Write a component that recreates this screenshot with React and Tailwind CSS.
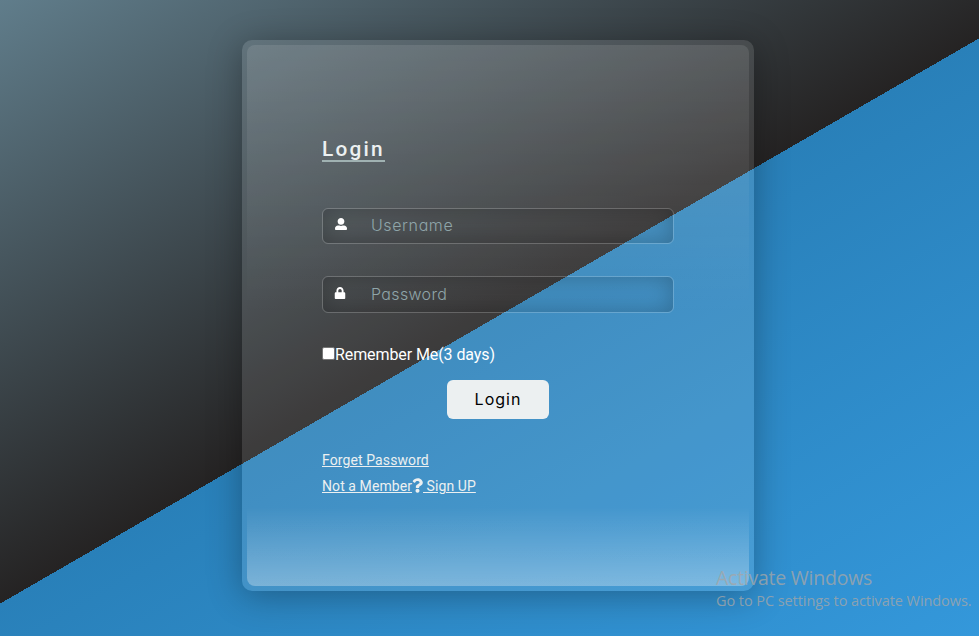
import { FaUserAlt, FaLock, FaQuestion } from "react-icons/fa";

function Field({ icon, label, type, className, iconClass, inputClass }) {
  return (
    <div
      className={`flex items-start rounded-md border border-white/20 shadow-[inset_0_0_25px_rgba(0,0,0,0.25)] ${className}`}
    >
      <span className={`flex shrink-0 text-white ${iconClass}`}>{icon}</span>
      <input
        type={type}
        placeholder={label}
        className={`min-w-0 flex-1 bg-transparent font-['Inter',sans-serif] text-[16px] font-light text-white outline-none [font-feature-settings:'cv11'] placeholder:text-[#8fa5a9] ${inputClass}`}
      />
    </div>
  );
}

export default function App() {
  return (
    <main className="relative flex h-[636px] w-[979px] items-start overflow-hidden bg-[linear-gradient(150deg,#607d8b_0%,#252323_50%,#2980b9_50%,#3498db_100%)] bg-[length:100%_642px] bg-no-repeat pt-10 pl-[242px] font-['Roboto',sans-serif]">
      <section className="h-[551px] w-[512px] rounded-[10px] bg-white/[0.11] p-[5px] shadow-[0_5px_35px_rgba(0,0,0,0.3)]">
        <form className="flex h-full flex-col items-start rounded-[8px] bg-[linear-gradient(to_bottom,rgba(255,255,255,0.1),rgba(255,255,255,0)_50%),linear-gradient(to_top,rgba(255,255,255,0.3),rgba(255,255,255,0)_80px)] px-[75px] pt-[91px]">
          <h1 className="h-[26px] border-b-2 border-[#a0b2b2] text-[20.8px] leading-[26px] font-medium tracking-[2.2px] text-[#ecf0f1]">
            Login
          </h1>
          <Field
            icon={<FaUserAlt size={12} />}
            label="Username"
            type="text"
            className="mt-[46px] h-9 w-[352px]"
            iconClass="mt-[9px] ml-3 w-9"
            inputClass="h-[32px] tracking-[0.6px]"
          />
          <Field
            icon={<FaLock size={12} />}
            label="Password"
            type="password"
            className="mt-8 h-[37px] w-[352px]"
            iconClass="mt-[10px] ml-[11px] w-[37px]"
            inputClass="h-[34px] tracking-[0.35px]"
          />
          <label className="mt-[31px] flex h-5 items-start text-[16px] leading-[22px] tracking-[-0.09px] text-white">
            <input
              type="checkbox"
              className="mt-[3px] size-[13px] appearance-none rounded-[2px] border border-[#767676] bg-white"
            />
            Remember Me(3 days)
          </label>
          <button
            type="button"
            className="mt-4 h-[39px] w-[102px] self-center rounded-md bg-[#ecf0f1] pb-[2px] font-['Inter',sans-serif] text-[16px] tracking-[1px] text-black"
          >
            Login
          </button>
          <a className="mt-[31px] text-[14px] leading-5 tracking-[0.1px] text-[#ecf0f1] underline">Forget Password</a>
          <a className="mt-[6px] text-[14px] leading-5 tracking-[0.08px] whitespace-pre text-[#ecf0f1] underline">
            Not a Member
            <FaQuestion size={15} className="inline-block w-[11px] align-[-2px]" />
            {" Sign UP"}
          </a>
        </form>
      </section>
      <aside className="absolute top-[565px] left-[716px] font-['Open_Sans',sans-serif] whitespace-nowrap text-[#a3a6a8]/80">
        <p className="text-[19.5px] leading-[26px] tracking-[-0.25px]">Activate Windows</p>
        <p className="text-[14.5px] leading-5 tracking-[-0.07px]">Go to PC settings to activate Windows.</p>
      </aside>
    </main>
  );
}
